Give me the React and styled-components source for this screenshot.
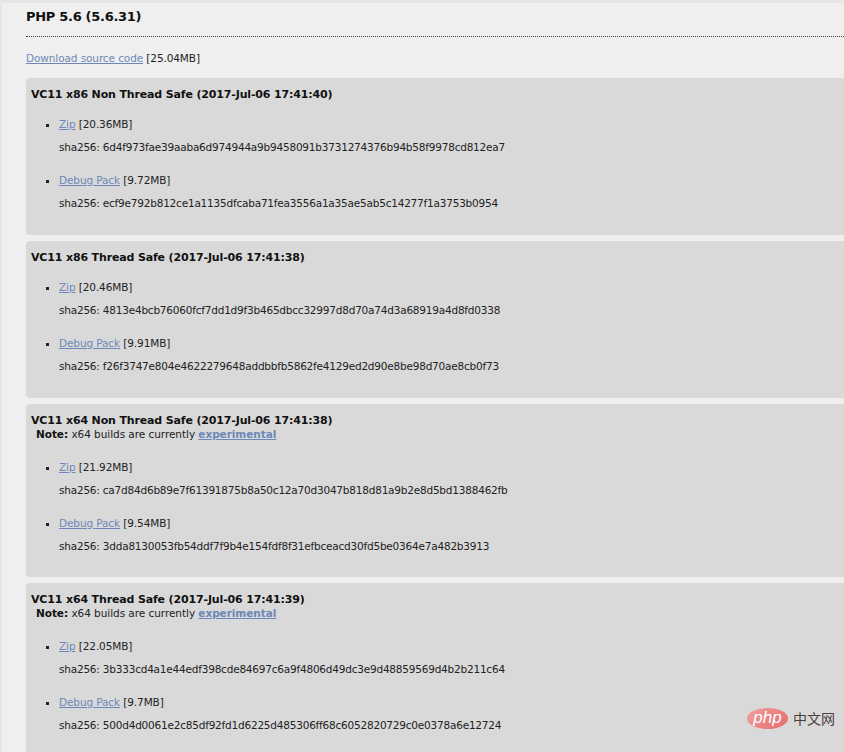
import React from "react";
import styled, { createGlobalStyle } from "styled-components";

const GlobalStyle = createGlobalStyle`
  html, body {
    margin: 0;
    padding: 0;
    height: 752px;
    overflow: hidden;
    background: #e6e6e6;
  }
  body {
    font-family: "DejaVu Sans", Verdana, sans-serif;
    font-size: 10.5px;
    letter-spacing: -0.1px;
    color: #222;
  }
`;

const Page = styled.div`
  position: relative;
  box-sizing: border-box;
  height: 749px;
  margin: 3px 0 0 2px;
  padding: 5px 0 0 24px;
  background: #efefef;
  overflow: hidden;
`;

const Title = styled.h2`
  margin: 0;
  font-size: 13px;
  line-height: 18px;
  font-weight: bold;
  letter-spacing: -0.3px;
  color: #111;
`;

const Rule = styled.hr`
  margin: 10px 0 0;
  border: 0;
  border-top: 1px dotted #444;
`;

const Source = styled.p`
  margin: 13px 0 12px;
  line-height: 16px;
`;

const Link = styled.a`
  color: #6d88b8;
  text-decoration: underline;
  font-weight: ${(p) => (p.$strong ? "bold" : "normal")};
`;

const Card = styled.section`
  box-sizing: border-box;
  height: ${(p) => p.$height}px;
  margin-bottom: 6px;
  padding: 10px 0 0 5px;
  background: #d9d9d9;
  border-radius: 4px 0 0 4px;
`;

const CardTitle = styled.h4`
  margin: 0;
  font-size: 11px;
  line-height: 14px;
  font-weight: bold;
  letter-spacing: -0.15px;
  color: #111;
`;

const Note = styled.div`
  margin: 0 0 19px 5px;
  line-height: 12px;
  letter-spacing: -0.05px;
  strong {
    color: #111;
  }
`;

const Files = styled.ul`
  margin: 14px 0 0;
  padding: 0 0 0 28px;
  list-style: square;
`;

const File = styled.li`
  margin-bottom: 16.5px;
  line-height: 16px;
`;

const Hash = styled.p`
  margin: 7.25px 0 0;
  line-height: 16px;
  letter-spacing: -0.21px;
`;

const Watermark = styled.div`
  position: absolute;
  right: 9px;
  bottom: 23px;
  display: flex;
  align-items: center;
  gap: 5px;
`;

const PhpBadge = styled.span`
  width: 41px;
  height: 21px;
  border-radius: 50%;
  background: linear-gradient(135deg, #f0a0a0, #e66a6a);
  color: #fff;
  font-family: "Liberation Sans", sans-serif;
  font-size: 17px;
  font-style: italic;
  line-height: 19px;
  letter-spacing: 0;
  text-align: center;
`;

const PhpLabel = styled.span`
  font-family: "Noto Sans CJK SC", sans-serif;
  font-size: 14px;
  line-height: 21px;
  letter-spacing: 0;
  color: #4a3f3f;
`;

const builds = [
  {
    title: "VC11 x86 Non Thread Safe (2017-Jul-06 17:41:40)",
    height: 157,
    files: [
      { name: "Zip", size: "20.36MB", sha: "6d4f973fae39aaba6d974944a9b9458091b3731274376b94b58f9978cd812ea7" },
      { name: "Debug Pack", size: "9.72MB", sha: "ecf9e792b812ce1a1135dfcaba71fea3556a1a35ae5ab5c14277f1a3753b0954" },
    ],
  },
  {
    title: "VC11 x86 Thread Safe (2017-Jul-06 17:41:38)",
    height: 157,
    files: [
      { name: "Zip", size: "20.46MB", sha: "4813e4bcb76060fcf7dd1d9f3b465dbcc32997d8d70a74d3a68919a4d8fd0338" },
      { name: "Debug Pack", size: "9.91MB", sha: "f26f3747e804e4622279648addbbfb5862fe4129ed2d90e8be98d70ae8cb0f73" },
    ],
  },
  {
    title: "VC11 x64 Non Thread Safe (2017-Jul-06 17:41:38)",
    height: 173,
    experimental: true,
    files: [
      { name: "Zip", size: "21.92MB", sha: "ca7d84d6b89e7f61391875b8a50c12a70d3047b818d81a9b2e8d5bd1388462fb" },
      { name: "Debug Pack", size: "9.54MB", sha: "3dda8130053fb54ddf7f9b4e154fdf8f31efbceacd30fd5be0364e7a482b3913" },
    ],
  },
  {
    title: "VC11 x64 Thread Safe (2017-Jul-06 17:41:39)",
    height: 173,
    experimental: true,
    files: [
      { name: "Zip", size: "22.05MB", sha: "3b333cd4a1e44edf398cde84697c6a9f4806d49dc3e9d48859569d4b2b211c64" },
      { name: "Debug Pack", size: "9.7MB", sha: "500d4d0061e2c85df92fd1d6225d485306ff68c6052820729c0e0378a6e12724" },
    ],
  },
];

export default function App() {
  return (
    <>
      <GlobalStyle />
      <Page>
        <Title>PHP 5.6 (5.6.31)</Title>
        <Rule />
        <Source>
          <Link href="#">Download source code</Link> [25.04MB]
        </Source>
        {builds.map((build) => (
          <Card key={build.title} $height={build.height}>
            <CardTitle>{build.title}</CardTitle>
            {build.experimental && (
              <Note>
                <strong>Note:</strong> x64 builds are currently{" "}
                <Link href="#" $strong>experimental</Link>
              </Note>
            )}
            <Files>
              {build.files.map((file) => (
                <File key={file.name}>
                  <Link href="#">{file.name}</Link> [{file.size}]
                  <Hash>sha256: {file.sha}</Hash>
                </File>
              ))}
            </Files>
          </Card>
        ))}
        <Watermark>
          <PhpBadge>php</PhpBadge>
          <PhpLabel>中文网</PhpLabel>
        </Watermark>
      </Page>
    </>
  );
}
